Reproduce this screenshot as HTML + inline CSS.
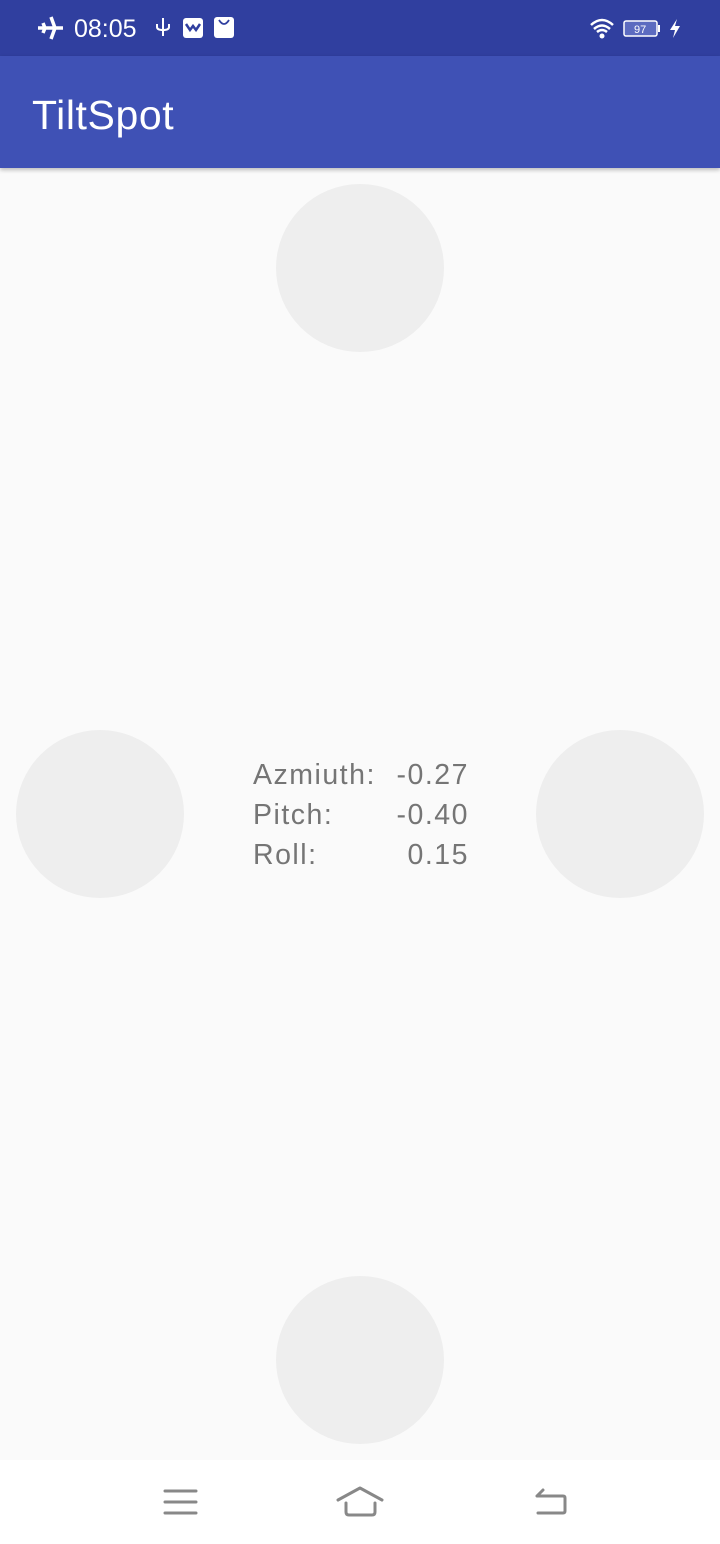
<!DOCTYPE html>
<html><head><style>
body{margin:0;width:720px;height:1544px;background:#FAFAFA;position:relative;overflow:hidden;font-family:"Liberation Sans",sans-serif}
.sb{position:absolute;left:0;top:0;width:720px;height:56px;background:#303F9F;color:#fff}
.ab{position:absolute;left:0;top:56px;width:720px;height:112px;background:#3F51B5;box-shadow:0 2px 4px rgba(0,0,0,.25)}
.ab span{position:absolute;left:32px;top:36px;font-size:41px;letter-spacing:0.6px;color:#fff}
.c{position:absolute;width:168px;height:168px;border-radius:50%;background:#EEEEEE}
.t{position:absolute;font-size:28.5px;letter-spacing:1.5px;color:#757575}
.nav{position:absolute;left:0;top:1460px;width:720px;height:84px;background:#fff}
</style></head><body>
<div class="sb">
<svg width="720" height="56" style="position:absolute;left:0;top:0">
<path d="M38 28 L63 28 M51 17 L55 28 L51 39 M43 23 L45 28 L43 33" stroke="#fff" stroke-width="3.5" fill="none"/>
<text x="74" y="37" font-family="Liberation Sans" font-size="25" fill="#fff">08:05</text>
<path d="M163 18 V36 M157 24 V27 Q157 30 163 30 Q169 30 169 27 V24" stroke="#fff" stroke-width="2" fill="none"/>
<rect x="183" y="18" width="20" height="20" rx="3" fill="#fff"/>
<path d="M186 24 L190 30 L193 26 L196 30 L200 24" stroke="#303F9F" stroke-width="2.5" fill="none"/>
<rect x="214" y="17" width="20" height="21" rx="3" fill="#fff"/>
<path d="M219 20 Q224 28 229 20" stroke="#303F9F" stroke-width="1.8" fill="none"/>
<path d="M591 25 Q602 15 613 25 M594 29 Q602 22 610 29 M597 32 Q602 28 607 32" stroke="#fff" stroke-width="2.5" fill="none"/>
<circle cx="602" cy="36" r="2.5" fill="#fff"/>
<rect x="624" y="21" width="33" height="15" rx="2" fill="#5C6BC0" stroke="#fff" stroke-width="1.5"/>
<rect x="658" y="25" width="2" height="7" fill="#fff"/>
<text x="634" y="33" font-family="Liberation Sans" font-size="11" fill="#fff">97</text>
<path d="M677 19 L670 30 L675 30 L673 38 L680 26 L675 26 Z" fill="#fff"/>
</svg>
</div>
<div class="ab"><span>TiltSpot</span></div>
<div class="c" style="left:276px;top:184px"></div>
<div class="c" style="left:16px;top:730px"></div>
<div class="c" style="left:536px;top:730px"></div>
<div class="c" style="left:276px;top:1276px"></div>
<div class="t" style="left:253px;top:759px">Azmiuth:</div>
<div class="t" style="left:253px;top:799px">Pitch:</div>
<div class="t" style="left:253px;top:839px">Roll:</div>
<div class="t" style="right:251px;top:759px">-0.27</div>
<div class="t" style="right:251px;top:799px">-0.40</div>
<div class="t" style="right:251px;top:839px">0.15</div>
<div class="nav">
<svg width="720" height="84" style="position:absolute;left:0;top:0">
<g stroke="#888" stroke-width="3" fill="none" stroke-linecap="round" stroke-linejoin="round">
<path d="M165 31 H196 M165 42 H196 M165 53 H196"/>
<path d="M338 40 L360 28 L382 40 M346 43 V52 Q346 55 349 55 H372 Q375 55 375 52 V43"/>
<path d="M537 36 H563 Q565 36 565 38 V51 Q565 53 563 53 H538 M537 36 L543 30"/>
</g></svg>
</div>
</body></html>
